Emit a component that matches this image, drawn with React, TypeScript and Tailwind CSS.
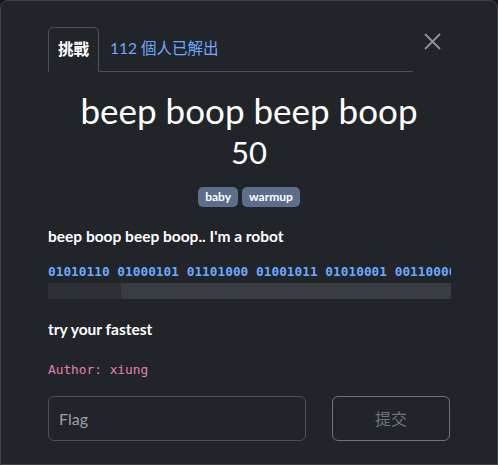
import React, { useState } from "react";

const binary =
  "01010110 01000101 01101000 01001011 01010001 00110000 01110010 01001110 01100011 01101000";

export default function App() {
  const [flag, setFlag] = useState("");

  return (
    <div className="w-[498px] h-[465px] bg-[#16181b] overflow-hidden" style={{ fontFamily: "Lato, 'Noto Sans CJK TC', sans-serif" }}>
      <div className="w-full h-full bg-[#212529] border border-[#3f444a] rounded-t-lg px-[47px] pt-[25px] flex flex-col text-[#dee2e6]">
        {/* tabs + close */}
        <div className="flex items-end">
          <div className="flex flex-1 items-end border-b border-[#495057]">
            <div className="-mb-px h-[45px] px-[9px] flex items-center border border-[#495057] border-b-[#212529] rounded-t-[5px] text-[15.5px] font-bold text-white">
              挑戰
            </div>
            <div className="h-[45px] px-[11px] flex items-center text-[15.5px] text-[#6ea8fe]">112 個人已解出</div>
          </div>
          <button className="w-[36px] self-start mt-[7px] ml-[1px] flex justify-center text-[#8f959b]">
            <svg width="17" height="17" viewBox="0 0 17 17" fill="none" stroke="currentColor" strokeWidth="1.8">
              <path d="M1 1L16 16M16 1L1 16" />
            </svg>
          </button>
        </div>

        {/* heading */}
        <h1 className="mt-[17px] text-center text-[35px] leading-[42px] text-white">beep boop beep boop</h1>
        <div className="mt-[3px] text-center text-[31px] leading-[36px] text-white">50</div>
        <div className="mt-[17px] flex justify-center gap-[4px]">
          <span className="px-[7px] h-[20px] flex items-center rounded-[5px] bg-[#5b6e8c] text-[12px] font-bold text-white">baby</span>
          <span className="px-[7px] h-[20px] flex items-center rounded-[5px] bg-[#5b6e8c] text-[12px] font-bold text-white">warmup</span>
        </div>

        {/* description */}
        <p className="mt-[19px] text-[15.5px] font-bold text-white leading-[20px]">beep boop beep boop.. I'm a robot</p>
        <div className="mt-[18px] w-[403px]">
          <pre className="overflow-hidden whitespace-pre text-[12.8px] leading-[16px] font-bold text-[#6ea8fe]" style={{ fontFamily: "'DejaVu Sans Mono', monospace" }}>
            {binary}
          </pre>
          <div className="mt-[3px] h-[16px] bg-[#383b40] flex">
            <div className="w-[73px] h-full bg-[#2d3037]" />
          </div>
        </div>
        <p className="mt-[20px] text-[15.5px] font-bold text-white leading-[20px]">try your fastest</p>
        <p className="mt-[22px] text-[12.8px] leading-[18px] text-[#e67fb3]" style={{ fontFamily: "'DejaVu Sans Mono', monospace" }}>
          Author: xiung
        </p>

        {/* submit */}
        <div className="mt-[17px] flex items-center w-[402px] justify-between">
          <input
            value={flag}
            onChange={(e) => setFlag(e.target.value)}
            placeholder="Flag"
            className="w-[258px] h-[45px] rounded-[6px] border border-[#495057] bg-transparent px-[10px] text-[16px] text-white placeholder-[#9aa0a6] outline-none"
          />
          <button className="w-[118px] h-[45px] rounded-[6px] border border-[#6c757d] text-[16px] text-[#6c757d]">提交</button>
        </div>
      </div>
    </div>
  );
}
